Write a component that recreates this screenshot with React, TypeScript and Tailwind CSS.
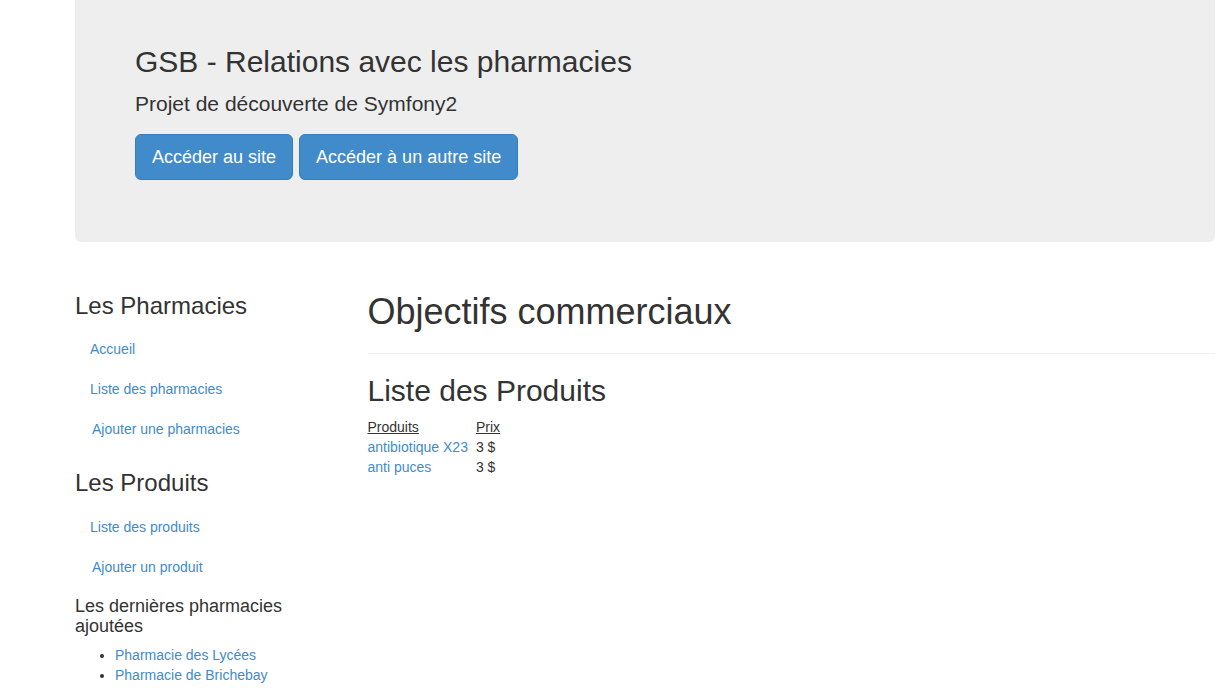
import React from 'react';

const font = { fontFamily: '"Liberation Sans", Arial, Helvetica, sans-serif' };

const produits = [
  { nom: 'antibiotique X23', prix: '3 $' },
  { nom: 'anti puces', prix: '3 $' },
];

export default function App() {
  return (
    <div className="min-h-[694px] bg-white pl-[75px] pr-[17px] text-[14px] leading-[20px] text-[#333]" style={font}>
      {/* Jumbotron */}
      <div className="rounded-b-[6px] bg-[#eeeeee] px-[60px] pt-[45px] pb-[62px]">
        <h1 className="text-[30px] leading-[33px] font-normal">GSB - Relations avec les pharmacies</h1>
        <p className="mt-[11px] text-[21px] leading-[30px] font-normal">Projet de découverte de Symfony2</p>
        <div className="mt-[15px] flex gap-[6px]">
          <a href="#" className="rounded-[6px] border border-[#357ebd] bg-[#428bca] px-[16px] py-[10px] text-[18px] leading-[24px] text-white no-underline">
            Accéder au site
          </a>
          <a href="#" className="rounded-[6px] border border-[#357ebd] bg-[#428bca] px-[16px] py-[10px] text-[18px] leading-[24px] text-white no-underline">
            Accéder à un autre site
          </a>
        </div>
      </div>

      <div className="mt-[30px] flex">
        {/* Sidebar */}
        <div className="w-[292.5px] shrink-0 pr-[30px]">
          <h3 className="mt-[21px] mb-[10px] text-[24px] leading-[26.4px] font-normal">Les Pharmacies</h3>
          <ul>
            <li><a href="#" className="block px-[15px] py-[10px] text-[#428bca]">Accueil</a></li>
            <li><a href="#" className="block px-[15px] py-[10px] text-[#428bca]">Liste des pharmacies</a></li>
            <li><a href="#" className="block pl-[17px] pr-[15px] py-[10px] text-[#428bca]">Ajouter une pharmacies</a></li>
          </ul>
          <h3 className="mt-[21px] mb-[10px] text-[24px] leading-[26.4px] font-normal">Les Produits</h3>
          <ul>
            <li><a href="#" className="block px-[15px] py-[10px] text-[#428bca]">Liste des produits</a></li>
            <li><a href="#" className="block pl-[17px] pr-[15px] py-[10px] text-[#428bca]">Ajouter un produit</a></li>
          </ul>
          <h4 className="mt-[10px] mb-[9px] text-[18px] leading-[19.8px] font-normal">Les dernières pharmacies ajoutées</h4>
          <ul className="list-disc pl-[40px]">
            <li><a href="#" className="text-[#428bca]">Pharmacie des Lycées</a></li>
            <li><a href="#" className="text-[#428bca]">Pharmacie de Brichebay</a></li>
          </ul>
        </div>

        {/* Main */}
        <div className="flex-1">
          <h1 className="mt-[20px] text-[36px] leading-[39.6px] font-normal">Objectifs commerciaux</h1>
          <hr className="mt-[21px] border-0 border-t border-[#eeeeee]" />
          <h2 className="mt-[20px] mb-[10px] text-[30px] leading-[33px] font-normal">Liste des Produits</h2>
          <table className="border-collapse">
            <thead>
              <tr>
                <th className="pr-[8px] text-left font-normal underline">Produits</th>
                <th className="text-left font-normal underline">Prix</th>
              </tr>
            </thead>
            <tbody>
              {produits.map((p) => (
                <tr key={p.nom}>
                  <td className="pr-[8px]"><a href="#" className="text-[#428bca]">{p.nom}</a></td>
                  <td>{p.prix}</td>
                </tr>
              ))}
            </tbody>
          </table>
        </div>
      </div>
    </div>
  );
}
